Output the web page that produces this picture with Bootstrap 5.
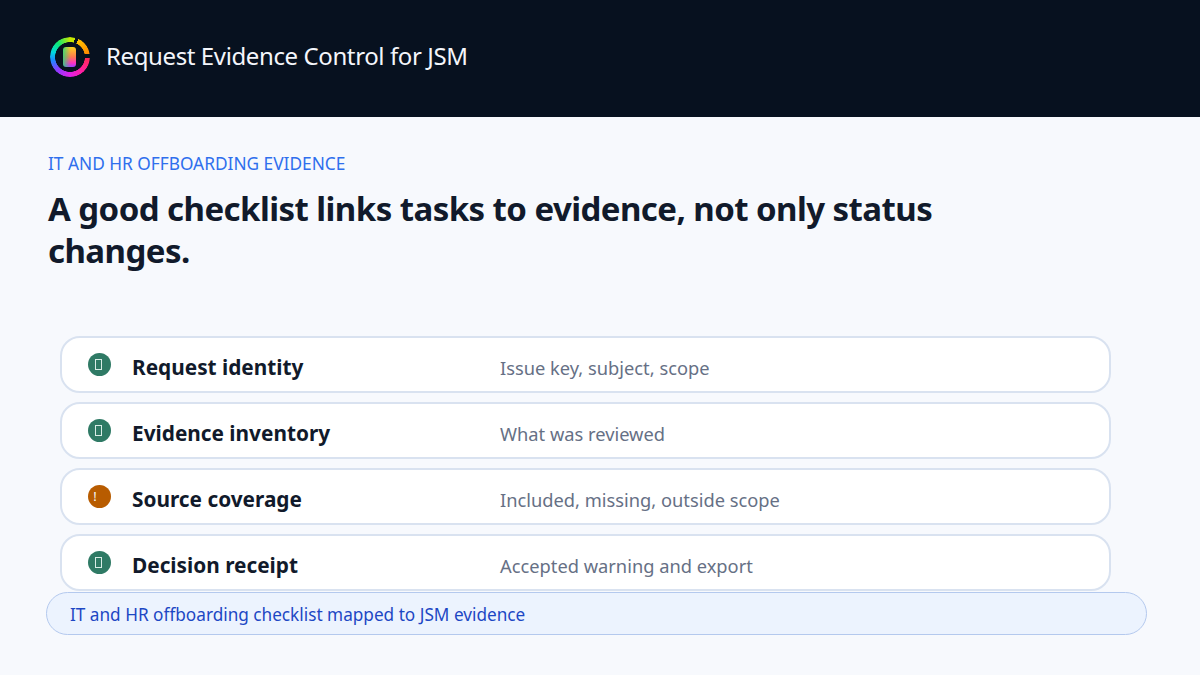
<!DOCTYPE html>
<html lang="en">
<head>
  <meta charset="UTF-8">
  <title>Request Evidence Control for JSM</title>
  <link rel="stylesheet" href="https://cdn.jsdelivr.net/npm/bootstrap@5.3.0/dist/css/bootstrap.min.css">
  <style>
    html, body { height: 100%; }
    body {
      width: 1200px;
      height: 675px;
      overflow: hidden;
      background: #f7f9fd;
      font-family: "Noto Sans", sans-serif;
      color: #111a2b;
    }
    .top-bar {
      height: 117px;
      background: #07111f;
      padding: 0 0 4px 50px;
      gap: 16px;
    }
    .top-bar h1 { font-size: 24px; font-weight: 400; letter-spacing: -.39px; color: #f4f6fb; margin: 0; }
    .logo-wrap { position: relative; width: 40px; height: 40px; flex: none; }
    .logo-ring {
      width: 40px;
      height: 40px;
      border-radius: 50%;
      background: conic-gradient(from 0deg,
        #c8e800 0deg 15deg, transparent 15deg 25deg,
        #ffc400 25deg, #ff8a00 80deg, transparent 80deg 92deg,
        #ff2a55 92deg, #ff1fa0 140deg, #e020e8 180deg, #8a3cff 225deg, #1a8cff 260deg,
        #00d8e0 285deg, #10e870 320deg, #c8e800 360deg);
      -webkit-mask: radial-gradient(circle, transparent 14.6px, #000 15.2px);
      mask: radial-gradient(circle, transparent 14.6px, #000 15.2px);
    }
    .logo-core {
      position: absolute;
      left: 13px;
      top: 10px;
      width: 13px;
      height: 20px;
      border-radius: 3px;
      background:
        linear-gradient(90deg, rgba(40,220,120,.85), rgba(255,200,0,0) 60%),
        linear-gradient(180deg, #ffd21f 0%, #ff7a50 50%, #ff30c0 80%, #a040ff 100%);
    }
    .intro { padding: 33px 48px 0; height: 219px; }
    .kicker { font-size: 17.3px; line-height: 28px; color: #2f6fed; }
    .headline { font-size: 33px; letter-spacing: -.56px; line-height: 42px; font-weight: 700; width: 960px; margin: 10px 0 0; color: #111a2b; }
    .check-list { padding: 0 89px 0 60px; gap: 9px; }
    .check-row {
      height: 57px;
      background: #fff;
      border: 2px solid #d9e2f0;
      border-radius: 20px;
      padding: 0 0 0 26px;
    }
    .state-dot {
      width: 23px;
      height: 23px;
      border-radius: 50%;
      flex: none;
      color: #f6f8fd;
      font-size: 13px;
      line-height: 1;
    }
    .state-ok { background: #2f7a65; padding-right: 3px; }
    .state-warn { background: #b85c00; padding-right: 9px; }
    .tofu { width: 7px; height: 11px; border: 1px solid #d9ece6; }
    .check-name { width: 368px; margin-left: 21px; padding-top: 7px; font-size: 20.8px; font-weight: 700; color: #111a2b; }
    .check-note { font-size: 18.3px; padding-top: 6px; color: #667085; }
    .map-note {
      margin: 1px 53px 0 46px;
      height: 43px;
      padding: 2px 0 0 23px;
      background: #ecf3fe;
      border: 1px solid #b4c9ee;
      border-radius: 22px;
      font-size: 17.2px;
      color: #1d47c4;
    }
  </style>
</head>
<body>
  <header class="top-bar d-flex align-items-center">
    <div class="logo-wrap"><div class="logo-ring"></div><div class="logo-core"></div></div>
    <h1>Request Evidence Control for JSM</h1>
  </header>

  <section class="intro">
    <div class="kicker">IT AND HR OFFBOARDING EVIDENCE</div>
    <h2 class="headline">A good checklist links tasks to evidence, not only status changes.</h2>
  </section>

  <section class="check-list d-flex flex-column">
    <div class="check-row d-flex align-items-center">
      <span class="state-dot state-ok d-flex align-items-center justify-content-center"><span class="tofu"></span></span>
      <span class="check-name">Request identity</span>
      <span class="check-note">Issue key, subject, scope</span>
    </div>
    <div class="check-row d-flex align-items-center">
      <span class="state-dot state-ok d-flex align-items-center justify-content-center"><span class="tofu"></span></span>
      <span class="check-name">Evidence inventory</span>
      <span class="check-note">What was reviewed</span>
    </div>
    <div class="check-row d-flex align-items-center">
      <span class="state-dot state-warn d-flex align-items-center justify-content-center">!</span>
      <span class="check-name">Source coverage</span>
      <span class="check-note">Included, missing, outside scope</span>
    </div>
    <div class="check-row d-flex align-items-center">
      <span class="state-dot state-ok d-flex align-items-center justify-content-center"><span class="tofu"></span></span>
      <span class="check-name">Decision receipt</span>
      <span class="check-note">Accepted warning and export</span>
    </div>
  </section>

  <div class="map-note d-flex align-items-center">IT and HR offboarding checklist mapped to JSM evidence</div>

  <script src="https://cdn.jsdelivr.net/npm/bootstrap@5.3.0/dist/js/bootstrap.bundle.min.js"></script>
</body>
</html>
